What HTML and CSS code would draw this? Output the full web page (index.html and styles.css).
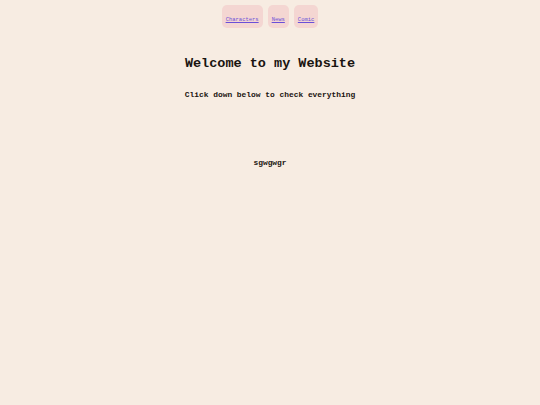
FILE: index.html
```html
<!DOCTYPE html>
<html>
<head>
<meta charset="utf-8">
<link rel="stylesheet" href="styles.css">
</head>
<body>
<nav class="nav">
  <a class="nav-btn" href="#">Characters</a>
  <a class="nav-btn" href="#">News</a>
  <a class="nav-btn" href="#">Comic</a>
</nav>
<h1 class="title">Welcome to my Website</h1>
<h2 class="subtitle">Click down below to check everything</h2>
<p class="misc">sgwgwgr</p>
</body>
</html>
```
FILE: styles.css
```css
html, body {
  margin: 0;
  padding: 0;
  background: #f7ece2;
  font-family: "Courier New", "Liberation Mono", monospace;
  color: #1a1410;
}
.nav {
  display: flex;
  justify-content: center;
  gap: 5px;
  padding-top: 5px;
}
.nav-btn {
  display: block;
  background: #f4d6d2;
  border-radius: 5px;
  padding: 0 4px;
  height: 23px;
  line-height: 30px;
  overflow: hidden;
  font-size: 5.5px;
  color: #6a4fd8;
  text-decoration: underline;
}
.title {
  margin: 26px 0 0;
  text-align: center;
  font-size: 13.5px;
  font-weight: bold;
  line-height: 20px;
}
.subtitle {
  margin: 15px 0 0;
  text-align: center;
  font-size: 7.9px;
  font-weight: bold;
  line-height: 12px;
}
.misc {
  margin: 56px 0 0;
  text-align: center;
  font-size: 7.9px;
  font-weight: bold;
  line-height: 12px;
}
```
